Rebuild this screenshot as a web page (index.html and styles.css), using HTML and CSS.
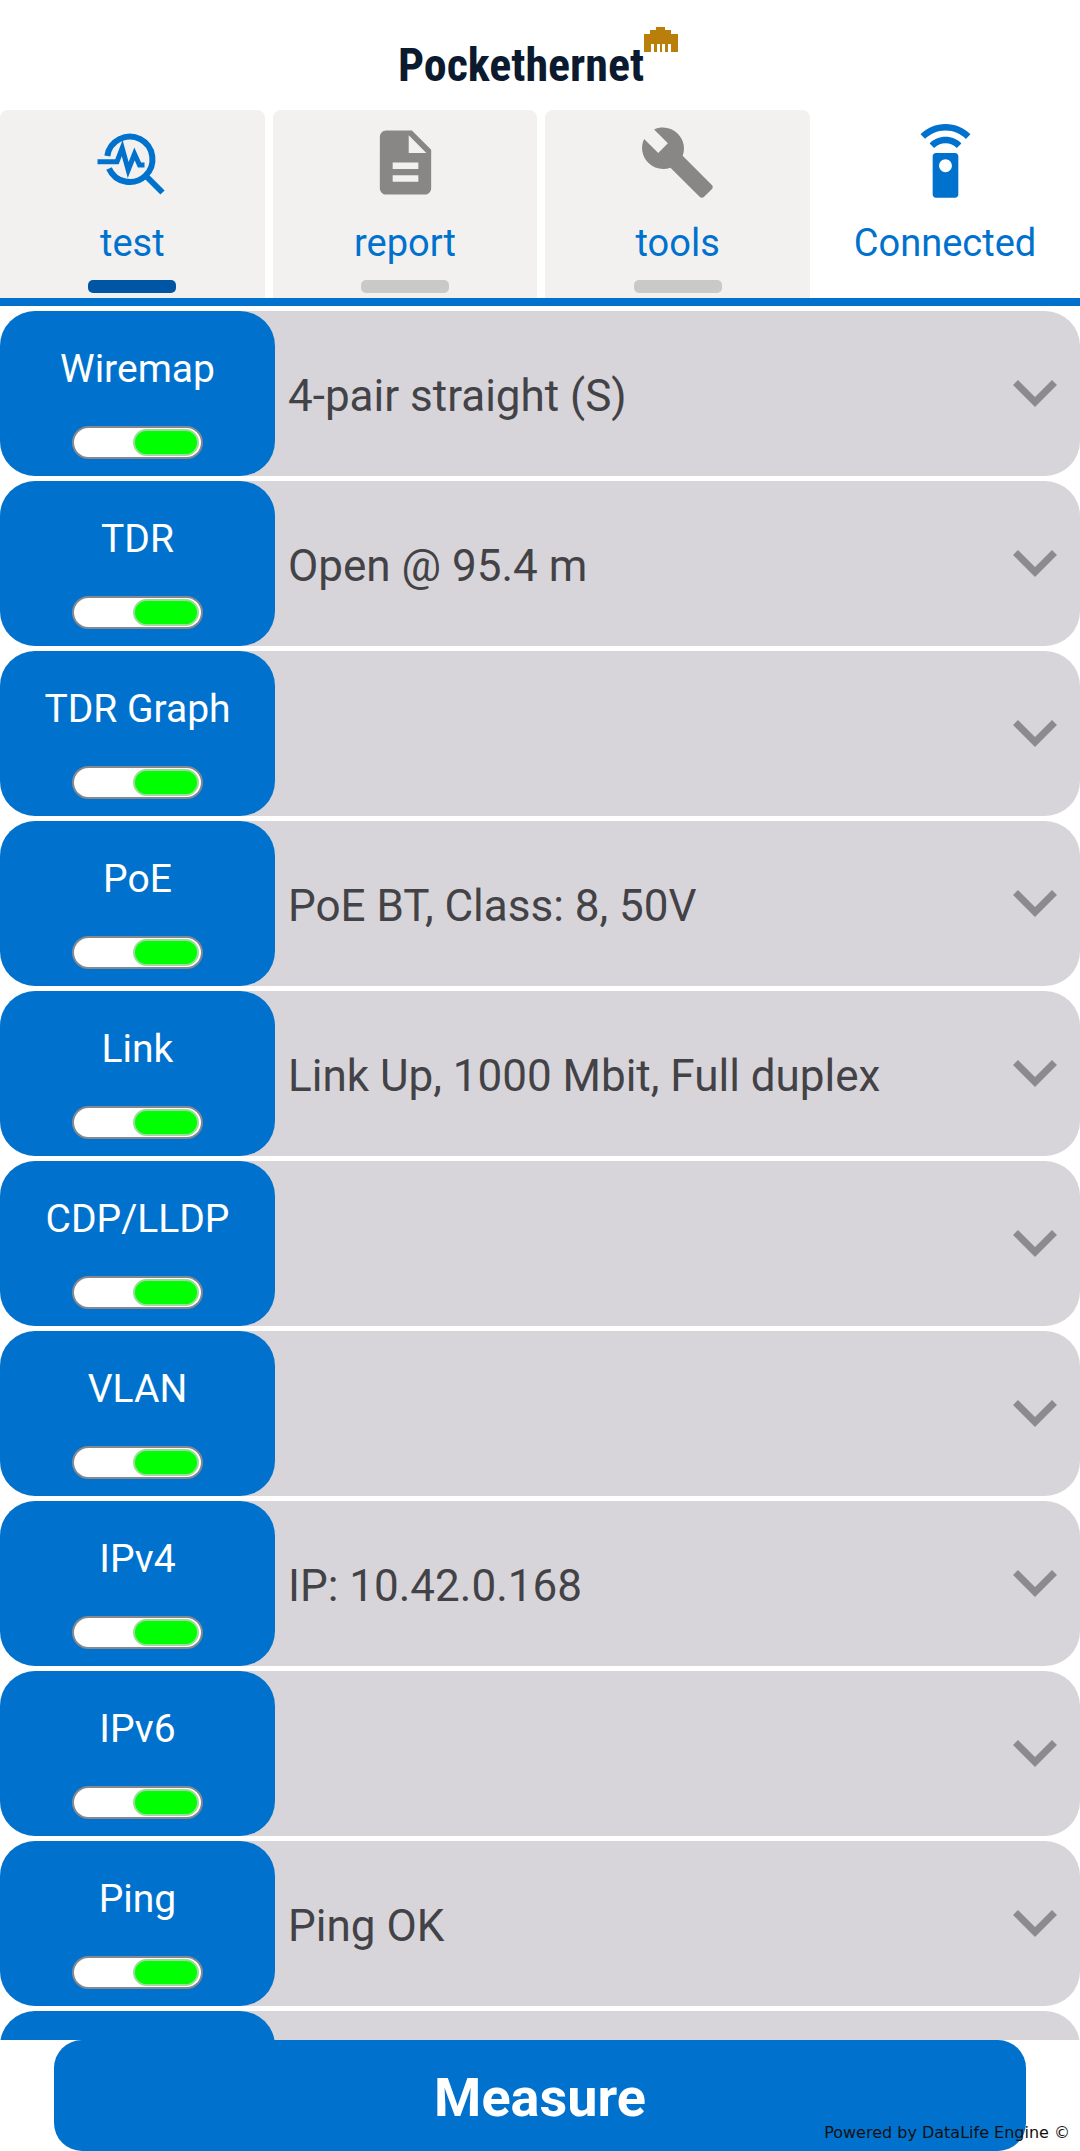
FILE: index.html
```html
<!DOCTYPE html>
<html lang="en">
<head>
<meta charset="utf-8">
<meta name="viewport" content="width=device-width, initial-scale=1">
<title>Pockethernet</title>
<link rel="stylesheet" href="styles.css">
</head>
<body>
<div class="app">
  <header class="brand">
    <span class="brand-name">Pockethernet</span>
    <svg class="brand-mark" viewBox="0 0 34 25" aria-hidden="true"><path d="M0 7H6V3H12V0H21V3H27V7H34V25H27V17H24V25H21V17H18V25H16V17H13V25H10V17H7V25H0Z"/></svg>
  </header>

  <div class="topbar">
    <nav class="tabs">
      <button class="tab active" type="button">
        <svg class="tab-icon" viewBox="0 0 77 77" aria-hidden="true"><g fill="none" stroke="currentColor"><path stroke-width="6" d="M13.3 32A22.700 22.700 0 1 1 15 44.500M51 51L68.500 68.500"/><path stroke-width="5" d="M3.500 37.700H23L28.200 24L34.200 46L40.500 30L45.500 41H50.500"/></g></svg>
        <span class="tab-label">test</span>
        <span class="tab-bar"></span>
      </button>
      <button class="tab" type="button">
        <svg class="tab-icon" viewBox="0 0 24 24" aria-hidden="true"><path d="M14 2H6c-1.100 0-1.990.9-1.990 2L4 20c0 1.100.89 2 1.990 2H18c1.100 0 2-.9 2-2V8l-6-6zm2 16H8v-2h8v2zm0-4H8v-2h8v2zm-3-5V3.500L18.500 9H13z"/></svg>
        <span class="tab-label">report</span>
        <span class="tab-bar"></span>
      </button>
      <button class="tab" type="button">
        <svg class="tab-icon" viewBox="0 0 24 24" aria-hidden="true"><path d="M22.700 19l-9.100-9.100c.9-2.300.4-5-1.500-6.900-2-2-5-2.400-7.400-1.300L9 6 6 9 1.600 4.700C.4 7.100.9 10.100 2.900 12.100c1.900 1.900 4.600 2.400 6.900 1.500l9.100 9.100c.4.4 1 .4 1.400 0l2.300-2.300c.5-.4.5-1.100.1-1.400z"/></svg>
        <span class="tab-label">tools</span>
        <span class="tab-bar"></span>
      </button>
    </nav>
    <button class="connection" type="button">
      <svg class="tab-icon" viewBox="0 0 24 24" aria-hidden="true"><path d="M15 9H9c-.55 0-1 .45-1 1v12c0 .55.45 1 1 1h6c.55 0 1-.45 1-1V10c0-.55-.45-1-1-1zm-3 6c-1.100 0-2-.9-2-2s.9-2 2-2 2 .9 2 2-.9 2-2 2zM7.050 6.050l1.410 1.410C9.370 6.560 10.620 6 12 6s2.630.56 3.540 1.460l1.410-1.410C15.680 4.780 13.930 4 12 4s-3.680.78-4.950 2.050zM12 0C8.960 0 6.210 1.230 4.220 3.220l1.410 1.410C7.260 3.010 9.510 2 12 2s4.740 1.010 6.360 2.640l1.410-1.410C17.790 1.230 15.040 0 12 0z"/></svg>
      <span class="tab-label">Connected</span>
    </button>
  </div>

  <main class="tests">
    <div class="row">
      <label class="switch"><span>Wiremap</span><input type="checkbox" checked></label>
      <button class="result" type="button"><span>4-pair straight (S)</span><svg class="chevron" viewBox="0 0 44 27" aria-hidden="true"><path d="M2.500 2.500L22 22L41.500 2.500"/></svg></button>
    </div>
    <div class="row">
      <label class="switch"><span>TDR</span><input type="checkbox" checked></label>
      <button class="result" type="button"><span>Open @ 95.4 m</span><svg class="chevron" viewBox="0 0 44 27" aria-hidden="true"><path d="M2.500 2.500L22 22L41.500 2.500"/></svg></button>
    </div>
    <div class="row">
      <label class="switch"><span>TDR Graph</span><input type="checkbox" checked></label>
      <button class="result" type="button"><span></span><svg class="chevron" viewBox="0 0 44 27" aria-hidden="true"><path d="M2.500 2.500L22 22L41.500 2.500"/></svg></button>
    </div>
    <div class="row">
      <label class="switch"><span>PoE</span><input type="checkbox" checked></label>
      <button class="result" type="button"><span>PoE BT, Class: 8, 50V</span><svg class="chevron" viewBox="0 0 44 27" aria-hidden="true"><path d="M2.500 2.500L22 22L41.500 2.500"/></svg></button>
    </div>
    <div class="row">
      <label class="switch"><span>Link</span><input type="checkbox" checked></label>
      <button class="result" type="button"><span>Link Up, 1000 Mbit, Full duplex</span><svg class="chevron" viewBox="0 0 44 27" aria-hidden="true"><path d="M2.500 2.500L22 22L41.500 2.500"/></svg></button>
    </div>
    <div class="row">
      <label class="switch"><span>CDP/LLDP</span><input type="checkbox" checked></label>
      <button class="result" type="button"><span></span><svg class="chevron" viewBox="0 0 44 27" aria-hidden="true"><path d="M2.500 2.500L22 22L41.500 2.500"/></svg></button>
    </div>
    <div class="row">
      <label class="switch"><span>VLAN</span><input type="checkbox" checked></label>
      <button class="result" type="button"><span></span><svg class="chevron" viewBox="0 0 44 27" aria-hidden="true"><path d="M2.500 2.500L22 22L41.500 2.500"/></svg></button>
    </div>
    <div class="row">
      <label class="switch"><span>IPv4</span><input type="checkbox" checked></label>
      <button class="result" type="button"><span>IP: 10.42.0.168</span><svg class="chevron" viewBox="0 0 44 27" aria-hidden="true"><path d="M2.500 2.500L22 22L41.500 2.500"/></svg></button>
    </div>
    <div class="row">
      <label class="switch"><span>IPv6</span><input type="checkbox" checked></label>
      <button class="result" type="button"><span></span><svg class="chevron" viewBox="0 0 44 27" aria-hidden="true"><path d="M2.500 2.500L22 22L41.500 2.500"/></svg></button>
    </div>
    <div class="row">
      <label class="switch"><span>Ping</span><input type="checkbox" checked></label>
      <button class="result" type="button"><span>Ping OK</span><svg class="chevron" viewBox="0 0 44 27" aria-hidden="true"><path d="M2.500 2.500L22 22L41.500 2.500"/></svg></button>
    </div>
    <div class="row">
      <div class="switch"></div>
    </div>
  </main>

  <footer class="actions">
    <button class="measure" type="button">Measure</button>
    <span class="credit">Powered by DataLife Engine ©</span>
  </footer>
</div>
</body>
</html>
```
FILE: styles.css
```css
:root {
  --blue: #0072ce;
  --gray: #888786;
  --panel: #d7d5d9;
}

*,
*::before {
  box-sizing: border-box;
}

body {
  margin: 0;
  background: #fff;
  font-family: Roboto, "Liberation Sans", sans-serif;
}

button {
  margin: 0;
  padding: 0;
  border: 0;
  background: none;
  font: inherit;
  color: inherit;
}

.app {
  display: flex;
  flex-direction: column;
  height: 100vh;
}

.brand {
  display: flex;
  justify-content: center;
  align-items: flex-start;
  height: 110px;
  padding: 27px 4px 0 0;
  flex: none;
}

.brand-name {
  padding-top: 12px;
  font-family: "Liberation Sans Narrow", "Roboto Condensed", "Open Sans Condensed", "Liberation Sans", sans-serif;
  font-size: 46px;
  line-height: 52px;
  font-weight: 700;
  color: #0b1a2e;
}

.brand-mark {
  width: 34px;
  height: 25px;
  fill: #b97f0a;
}

.topbar {
  display: flex;
  flex: none;
  height: 196px;
  border-bottom: 8px solid var(--blue);
}

.tabs {
  display: flex;
  gap: 8px;
  width: 75%;
}

.tab,
.connection {
  display: flex;
  flex: 1;
  flex-direction: column;
  align-items: center;
  padding-top: 14px;
  color: var(--blue);
}

.tab {
  background: #f2f1f0;
  border-radius: 8px 8px 0 0;
}

.tab-icon {
  width: 77px;
  height: 77px;
  fill: var(--gray);
}

.active .tab-icon,
.connection .tab-icon {
  fill: var(--blue);
}

.tab-label {
  margin-top: 18px;
  font-size: 38px;
  line-height: 48px;
}

.tab-bar {
  width: 88px;
  height: 13px;
  margin-top: 13px;
  border-radius: 5px;
  background: #c9c9c8;
}

.active .tab-bar {
  background: #0055a5;
}

.tests {
  display: flex;
  flex: 1;
  flex-direction: column;
  gap: 5px;
  min-height: 0;
  padding-top: 5px;
  overflow-y: auto;
  scrollbar-width: none;
}

.row {
  display: flex;
  flex: none;
  height: 165px;
  border-radius: 35px;
  background: var(--panel);
}

.switch {
  display: flex;
  flex-direction: column;
  align-items: center;
  gap: 33px;
  width: 275px;
  padding-top: 34px;
  border-radius: 35px;
  background: var(--blue);
  color: #fff;
  font-size: 39px;
  line-height: 48px;
}

.switch input {
  display: flex;
  justify-content: flex-end;
  appearance: none;
  width: 131px;
  height: 33px;
  margin: 0;
  padding: 1px 2px;
  border: 2px solid #85888c;
  border-radius: 17px;
  background: #fff;
}

.switch input::before {
  content: "";
  width: 66px;
  height: 27px;
  border: 2px solid #9bdc9b;
  border-radius: 14px;
  background: #0f0;
}

.switch input:not(:checked) {
  justify-content: flex-start;
}

.result {
  display: flex;
  flex: 1;
  align-items: center;
  justify-content: space-between;
  padding: 0 23px 0 13px;
  color: #434247;
  font-size: 44px;
  line-height: 52px;
  text-align: left;
}

.result span {
  padding-top: 4px;
}

.chevron {
  width: 44px;
  height: 27px;
  fill: none;
  stroke: #8b8a8c;
  stroke-width: 7;
}

.actions {
  position: relative;
  display: flex;
  flex: none;
  padding: 0 5%;
}

.measure {
  flex: 1;
  height: 111px;
  padding-top: 4px;
  border-radius: 28px;
  background: var(--blue);
  color: #fff;
  font-size: 54px;
  line-height: 64px;
  font-weight: 700;
}

.credit {
  position: absolute;
  right: 10px;
  bottom: 8px;
  color: #111;
  font-family: "DejaVu Sans", sans-serif;
  font-size: 16px;
  line-height: 20px;
}
```
